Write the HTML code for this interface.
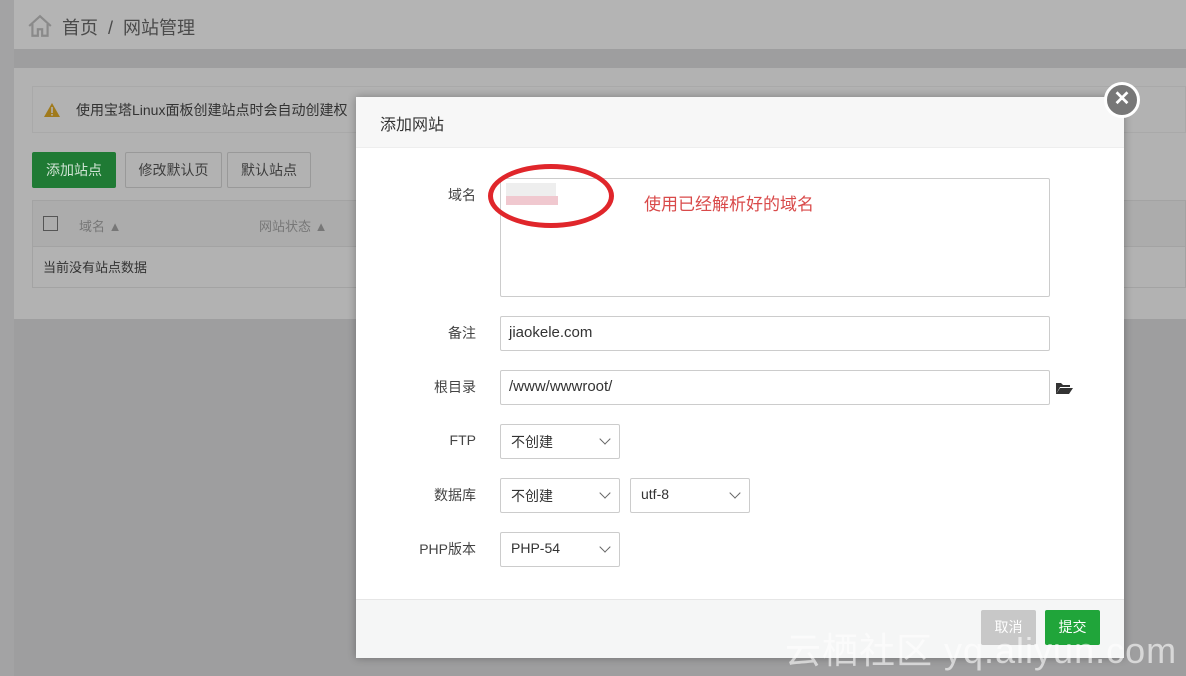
<!DOCTYPE html>
<html><head><meta charset="utf-8"><style>
*{box-sizing:border-box;margin:0;padding:0}
body{width:1186px;height:676px;overflow:hidden;background:#9e9e9f;font-family:"Liberation Sans","Noto Sans CJK SC",sans-serif;position:relative;color:#333}
.abs{position:absolute}
.top{left:14px;top:0;width:1172px;height:49px;background:#b4b4b4}
.card{left:14px;top:68px;width:1172px;height:251px;background:#b2b2b2}
.sel{position:absolute;height:35px;border:1px solid #ccc;border-radius:2px;background:#fff;font-size:14px;padding:7px 10px;color:#333}
.sel:after{content:"";position:absolute;right:10px;top:10px;width:7px;height:7px;border-right:1px solid #666;border-bottom:1px solid #666;transform:rotate(45deg)}
.inp{position:absolute;left:500px;width:550px;border:1px solid #ccc;border-radius:2px;background:#fff;font-size:15px;padding:7px 8px}
.lab{position:absolute;right:710px;font-size:14px;color:#444;text-align:right}
</style></head><body>
<div class="abs" style="left:0;top:0;width:14px;height:676px;background:#a3a3a4"></div>
<div class="abs top"></div>
<svg class="abs" style="left:27px;top:13px" width="26" height="26" viewBox="0 0 24 24"><path d="M2 12 L12 3 L22 12 M5 10 V21 H10 V15 H14 V21 H19 V10" fill="none" stroke="#8a8a8a" stroke-width="2"/></svg>
<div class="abs" style="left:62px;top:14px;font-size:18px;color:#4a4a4a">首页 &nbsp;/ &nbsp;网站管理</div>
<div class="abs card"></div>
<div class="abs" style="left:32px;top:86px;width:1154px;height:47px;border:1px solid #a9a9a9;background:#b2b2b2"></div>
<svg class="abs" style="left:43px;top:102px" width="18" height="16"><path d="M9 1 L17 15 H1 Z" fill="#a07a1c"/><rect x="8.2" y="5" width="1.6" height="6" fill="#b2b2b2"/><rect x="8.2" y="12" width="1.6" height="1.6" fill="#b2b2b2"/></svg>
<div class="abs" style="left:76px;top:100px;font-size:14px;color:#333">使用宝塔Linux面板创建站点时会自动创建权</div>
<div class="abs" style="left:32px;top:152px;width:84px;height:36px;background:#1f7a34;border-radius:2px;color:#cfe3d3;font-size:14px;text-align:center;line-height:36px">添加站点</div>
<div class="abs" style="left:125px;top:152px;width:97px;height:36px;border:1px solid #999;border-radius:2px;color:#3d3d3d;font-size:14px;text-align:center;line-height:34px">修改默认页</div>
<div class="abs" style="left:227px;top:152px;width:84px;height:36px;border:1px solid #999;border-radius:2px;color:#3d3d3d;font-size:14px;text-align:center;line-height:34px">默认站点</div>
<div class="abs" style="left:32px;top:200px;width:1154px;height:47px;background:#acacac;border:1px solid #a3a3a3"></div>
<div class="abs" style="left:32px;top:246px;width:1154px;height:42px;border:1px solid #a3a3a3;border-top:none"></div>
<div class="abs" style="left:43px;top:216px;width:15px;height:15px;border:1px solid #555"></div>
<div class="abs" style="left:79px;top:216px;font-size:13px;color:#777">域名 ▲</div>
<div class="abs" style="left:259px;top:216px;font-size:13px;color:#777">网站状态 ▲</div>
<div class="abs" style="left:43px;top:257px;font-size:13px;color:#333">当前没有站点数据</div>

<div class="abs" style="left:356px;top:97px;width:768px;height:561px;background:#fff;box-shadow:0 0 8px rgba(0,0,0,.3)"></div>
<div class="abs" style="left:356px;top:97px;width:768px;height:51px;background:#f7f7f7;border-bottom:1px solid #eee;font-size:16px;color:#333;padding:14px 24px">添加网站</div>
<div class="abs" style="left:1104px;top:82px;width:36px;height:36px;border-radius:50%;background:#777;border:3px solid #fff;color:#fff;font-size:20px;text-align:center;line-height:28px;font-weight:bold">✕</div>

<div class="lab" style="top:185px">域名</div>
<div class="abs" style="left:500px;top:178px;width:550px;height:119px;border:1px solid #ccc;border-radius:2px"></div>
<div class="abs" style="left:506px;top:183px;width:50px;height:22px;background:#eee"></div>
<div class="abs" style="left:506px;top:196px;width:52px;height:9px;background:#f0c8cf"></div>
<div class="abs" style="left:488px;top:164px;width:126px;height:64px;border:5px solid #e0262b;border-radius:50%"></div>
<div class="abs" style="left:644px;top:190px;font-size:17px;color:#d94a4a">使用已经解析好的域名</div>

<div class="lab" style="top:323px">备注</div>
<div class="inp" style="top:316px;height:35px">jiaokele.com</div>
<div class="lab" style="top:377px">根目录</div>
<div class="inp" style="top:370px;height:35px">/www/wwwroot/</div>
<svg class="abs" style="left:1055px;top:381px" width="18" height="14"><path d="M1 2 H6 L8 4 H15 V6 H5 L1 13 Z M5 7 H18 L14 13 H1 Z" fill="#333"/></svg>
<div class="lab" style="top:432px">FTP</div>
<div class="sel" style="left:500px;top:424px;width:120px">不创建</div>
<div class="lab" style="top:485px">数据库</div>
<div class="sel" style="left:500px;top:478px;width:120px">不创建</div>
<div class="sel" style="left:630px;top:478px;width:120px">utf-8</div>
<div class="lab" style="top:539px">PHP版本</div>
<div class="sel" style="left:500px;top:532px;width:120px">PHP-54</div>

<div class="abs" style="left:356px;top:599px;width:768px;height:59px;background:#f5f6f6;border-top:1px solid #e6e6e6"></div>
<div class="abs" style="left:981px;top:610px;width:55px;height:35px;background:#c8c8c8;border-radius:2px;color:#fff;font-size:14px;text-align:center;line-height:35px">取消</div>
<div class="abs" style="left:1045px;top:610px;width:55px;height:35px;background:#20a53a;border-radius:2px;color:#fff;font-size:14px;text-align:center;line-height:35px">提交</div>
<div class="abs" style="left:785px;top:622px;font-size:36px;color:rgba(255,255,255,.6);white-space:nowrap;letter-spacing:1px">云栖社区 yq.aliyun.com</div>
</body></html>
